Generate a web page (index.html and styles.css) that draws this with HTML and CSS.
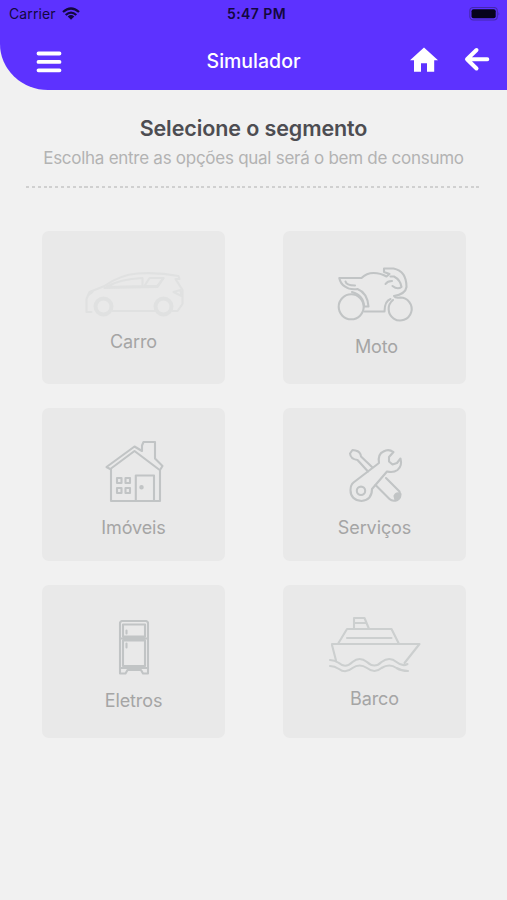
FILE: index.html
```html
<!DOCTYPE html>
<html lang="pt-BR">
<head>
<meta charset="utf-8">
<title>Simulador</title>
<link rel="stylesheet" href="styles.css">
</head>
<body>
<header class="header">
  <div class="status">
    <div class="carrier"><span class="carrier-name">Carrier</span>
      <svg width="18" height="14" viewBox="0 0 18 14"><path d="M1 5Q9-2 17 5M3.700 8Q9 3.200 14.300 8" fill="none" stroke="currentColor" stroke-width="2.300"/><path d="M5.700 9.400Q9 6.500 12.300 9.400L9 12.700Z" fill="currentColor"/></svg>
    </div>
    <span class="time">5:47 PM</span>
    <div class="battery"><svg width="32" height="14" viewBox="0 0 32 14"><rect x=".8" y=".5" width="27.500" height="12.500" rx="3.500" fill="none" stroke="#4428ae" stroke-width="1.100"/><rect x="2.500" y="2.300" width="24.200" height="9" rx="2" fill="#07031c"/><path d="M29.500 4.800q1.500 2 0 4z" fill="#4428ae"/></svg></div>
  </div>
  <nav class="nav">
    <svg class="menu" width="26" height="24" viewBox="0 0 26 24"><path d="M2.500 3.500H23.500M2.500 11.900H23.500M2.500 20.300H23.500" stroke="#fff" stroke-width="3.800" stroke-linecap="round"/></svg>
    <h1 class="title">Simulador</h1>
    <div class="actions">
      <svg width="28" height="26" viewBox="0 0 28 26"><path d="M14 .5L28 13.200H24.200V24.800H17V16.200H11V24.800H4V13.200H0Z" fill="#fff"/></svg>
      <svg width="26" height="26" viewBox="0 0 26 26"><path d="M12.500 3L3 12.200L12.500 21.500M3.500 12.200H23.300" fill="none" stroke="#fff" stroke-width="4" stroke-linecap="round" stroke-linejoin="round"/></svg>
    </div>
  </nav>
</header>
<main>
  <section class="intro">
    <h2 class="heading">Selecione o segmento</h2>
    <p class="sub">Escolha entre as opções qual será o bem de consumo</p>
    <div class="rule"></div>
  </section>
  <section class="grid">
    <div class="card">
      <svg class="icon car" width="120" height="98" viewBox="73.500 231 120 98">
        <path d="M91 312H86V299L89 292L104 286Q119 275 137 273.500Q158 272 178 276L179 279H175L182 290V304L177 311H172M112 311H156"/>
        <path d="M106 287Q119 279 142 278V286ZM149 278H163L157 286H144Z"/>
        <path d="M163 278L157 287L104 288M88 295L92 292M173 292L180 290L181 296Z"/>
        <circle cx="103" cy="306.500" r="8" stroke-width="4"/><circle cx="163" cy="306.500" r="8" stroke-width="4"/>
      </svg>
      <span class="label">Carro</span>
    </div>
    <div class="card">
      <svg class="icon" width="120" height="103" viewBox="314.500 231 120 103">
        <circle cx="350.700" cy="306.800" r="12.500"/>
        <path d="M392.500 300A11.500 11.500 0 1 0 399.500 297.500Q395 298.500 393.500 296Q405 294 406 287Q406 271 393 268.500H383.500V272L389 274L386 276.500Q380 273 373 273Q366 273 361 278H338.800Q340 284 344.500 286.500Q349 290 357 289Q367 293 368 306.500H363.500Q363 295 351.500 292"/>
        <path d="M345 281.500Q346 285.500 354.500 285.500M364 311.500H384Q384 301 390 299M390 276.500H393.500Q400 280 401 287Q397 290 392 286M391.500 281Q387 281 385 284"/>
      </svg>
      <span class="label moto">Moto</span>
    </div>
    <div class="card">
      <svg class="icon" width="120" height="107" viewBox="73.500 408 120 107">
        <path d="M110.500 501V469.500L106 467L134 446.500L141.500 451V445.500L143 442H154.500V458.500L162 466L159.500 470V501Z"/>
        <path d="M110.500 468.500L134 451L158.500 469.500M135.300 500V475.500H153.500V500" />
        <path d="M116.500 478H121V483H116.500ZM125 478H129.500V483H125ZM116.500 488H121V493H116.500ZM125 488H129.500V493H125Z"/><circle cx="141" cy="487.200" r="1.200"/>
      </svg>
      <span class="label">Imóveis</span>
    </div>
    <div class="card">
      <svg class="icon" width="120" height="107" viewBox="314.500 408 120 107">
        <path d="M353 482.500L378.500 463Q377 454 383 451.500Q388 448.500 393 452L388.500 457V461.500L392 464.500L396.500 463L400 458.500Q402 466 397 470Q393 473 386.500 471.500L371.500 489Q371.500 500 361 501Q350 500 350 490Q350 485 353 482.500Z"/>
        <circle cx="360.500" cy="490.800" r="4.200"/>
        <path d="M372 467.500L360.500 456.500Q360 451.500 355 450.500L352 450L349.500 453.500Q350 459 357 460L367.500 471.500M385.500 478L399 491.500Q401 497 397 500Q392 502 389 499L375 485"/>
        <path d="M394 496Q396 492 400 494Q400 499 395 500Z" fill="#c1c4c5"/>
      </svg>
      <span class="label">Serviços</span>
    </div>
    <div class="card">
      <svg class="icon" width="120" height="103" viewBox="73.500 586 120 103">
        <path d="M119.500 674.500V623.500L121 622H146L147.500 623.500V674.500H142.500L140.500 671H127L125 674.500Z"/>
        <path d="M122.500 625.500H144.500V637.500H122.500ZM122.500 641.500H144.500V667H122.500ZM120 639.500H147M120 669H147M126 631.500V634.500M126 644.500V648.500"/>
      </svg>
      <span class="label">Eletros</span>
    </div>
    <div class="card">
      <svg class="icon boat" width="120" height="101" viewBox="314.500 586 120 101">
        <path d="M335.500 661.500L331.500 646V645H419L404 664M338 644L346.500 630H391L398 644M353.500 630V619H364L368.500 630M354 624H365M346.500 639H391"/>
        <path d="M329.500 661Q334 661 338.500 664Q345 670 352 663Q359 657 366.500 663Q374 670 381 663Q389 657 396 663Q402 668 407 665M329.500 667Q334 667 338.500 670Q345 675 352 669Q359 664 366.500 669Q374 675 381 669Q389 664 396 669Q401 672 407.500 672"/>
      </svg>
      <span class="label">Barco</span>
    </div>
  </section>
</main>
</body>
</html>
```
FILE: styles.css
```css
* { box-sizing: border-box; }
body { margin: 0; min-height: 900px; background: #f1f1f1; font-family: Inter, "Liberation Sans", sans-serif; }
h1, h2, p { margin: 0; }
svg { display: block; flex: none; }
.header { height: 90px; background: #5d32ff; border-bottom-left-radius: 48px 46px; color: #13083e; }
.status { display: grid; grid-template-columns: 1fr auto 1fr; align-items: center; height: 27px; padding: 0 6px 0 9px; }
.carrier { display: flex; gap: 6px; align-items: center; font-size: 14px; letter-spacing: .1px; }
.time { margin-left: 3px; font-size: 14px; font-weight: 600; letter-spacing: .4px; }
.battery { display: flex; justify-content: flex-end; }
.nav { display: grid; grid-template-columns: 1fr auto 1fr; align-items: center; height: 66px; padding: 0 17px; }
.menu { margin: 4px 0 0 19px; }
.title { color: #fff; font-size: 19.500px; font-weight: 500; line-height: 24px; margin-top: 1px; }
.actions { display: flex; justify-content: flex-end; gap: 26px; }
.intro { padding: 25px 26px 0; text-align: center; }
.heading { font-size: 21.500px; line-height: 26px; font-weight: 600; letter-spacing: -.1px; color: #4d4d52; white-space: nowrap; }
.sub { margin-top: 5px; font-size: 17px; line-height: 24px; letter-spacing: -.27px; color: #b3b3b3; white-space: nowrap; }
.rule { height: 2px; margin-top: 16px; background: repeating-linear-gradient(90deg, #d0d0d0 0 3px, transparent 3px 5.850px); }
.grid { display: grid; grid-template-columns: 183px 183px; grid-auto-rows: 152.500px; gap: 24.700px 58px; padding: 43px 0 0 42px; }
.card { display: flex; flex-direction: column; align-items: center; background: #e9e9e9; border-radius: 7px; }
.icon { fill: none; stroke: #c1c4c5; stroke-width: 2.100; stroke-linejoin: round; stroke-linecap: round; }
.car { stroke: #e0e1e1; }
.boat { stroke: #cccfcf; }
.label { margin-top: 1px; font-size: 18px; line-height: 24px; letter-spacing: -.1px; color: #a5a5a5; }
.moto { padding-left: 4px; }
```
